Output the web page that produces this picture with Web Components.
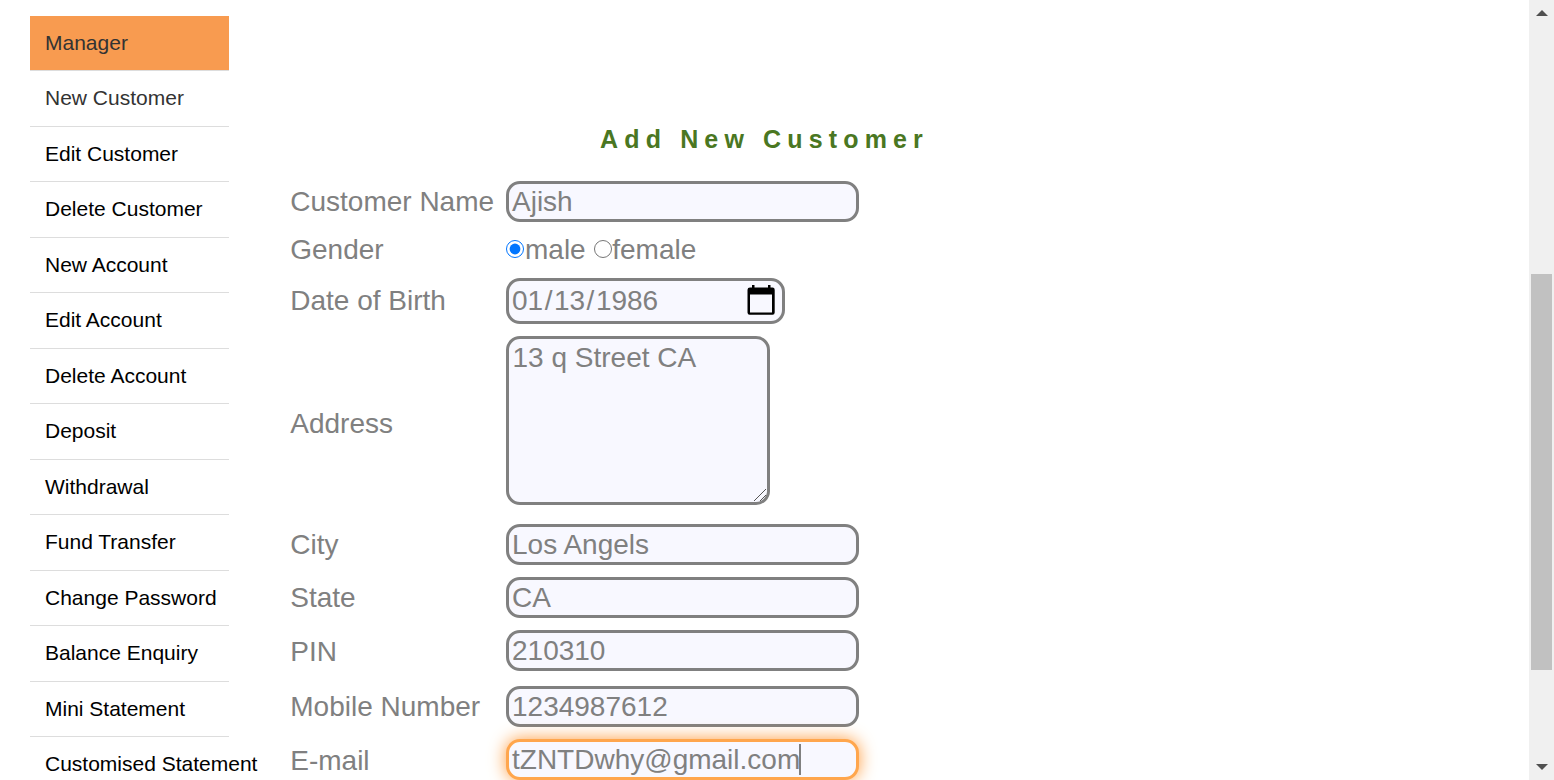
<!DOCTYPE html>
<html lang="en">
<head>
<meta charset="utf-8">
<title>Add New Customer</title>
<style>
html,body{margin:0;height:100%;overflow:hidden;background:#fff}
body{font-family:"Liberation Sans",Arial,sans-serif}
</style>
</head>
<body>
<bank-page>
  <side-menu slot="menu">
    <menu-item active>Manager</menu-item>
    <menu-item visited>New Customer</menu-item>
    <menu-item>Edit Customer</menu-item>
    <menu-item>Delete Customer</menu-item>
    <menu-item>New Account</menu-item>
    <menu-item>Edit Account</menu-item>
    <menu-item>Delete Account</menu-item>
    <menu-item>Deposit</menu-item>
    <menu-item>Withdrawal</menu-item>
    <menu-item>Fund Transfer</menu-item>
    <menu-item>Change Password</menu-item>
    <menu-item>Balance Enquiry</menu-item>
    <menu-item>Mini Statement</menu-item>
    <menu-item>Customised Statement</menu-item>
  </side-menu>
  <customer-form heading="Add New Customer">
    <form-row label="Customer Name"><text-field>Ajish</text-field></form-row>
    <form-row label="Gender" style="--h:44px"><radio-option checked>male</radio-option><radio-option>female</radio-option></form-row>
    <form-row label="Date of Birth" style="--h:58px"><date-field>01<span>/</span>13<span>/</span>1986</date-field></form-row>
    <form-row label="Address" style="--h:181px;--shift:3px"><area-field>13 q Street CA</area-field></form-row>
    <form-row label="City" style="margin-top:7px"><text-field>Los Angels</text-field></form-row>
    <form-row label="State"><text-field>CA</text-field></form-row>
    <form-row label="PIN" style="--shift:1px"><text-field>210310</text-field></form-row>
    <form-row label="Mobile Number" style="margin-top:3px"><text-field>1234987612</text-field></form-row>
    <form-row label="E-mail" style="--shift:1px"><text-field focused>tZNTDwhy@gmail.com</text-field></form-row>
  </customer-form>
  <page-scrollbar slot="bar"></page-scrollbar>
</bank-page>
<script>
const define = (name, html, setup) => customElements.define(name, class extends HTMLElement {
  constructor() {
    super();
    this.attachShadow({mode: 'open'}).innerHTML = html;
  }
  connectedCallback() { if (setup) setup(this, this.shadowRoot); }
});

define('bank-page', `<style>
:host{display:flex;height:780px;overflow:hidden;background:#fff}
main{flex:1;min-width:0}
</style><slot name="menu"></slot><main><slot></slot></main><slot name="bar"></slot>`);

define('side-menu', `<style>
:host{display:block;box-sizing:border-box;width:229px;padding:15.6px 0 0 30px;flex:none}
</style><slot></slot>`);

define('menu-item', `<style>
:host{display:block;box-sizing:border-box;height:55.5px;border-bottom:1px solid #ddd;padding-left:15px;
font-size:21px;line-height:54px;color:#000;white-space:nowrap}
:host([active]){background:#f89b50;color:#333}
:host([visited]){color:#333}
</style><slot></slot>`);

define('customer-form', `<style>
:host{display:block;padding:124px 0 0 61.25px;color:#808080;font-size:28px}
h1{margin:0 0 21px;padding-left:309.75px;font-size:25px;line-height:30px;letter-spacing:6.15px;color:#4a7722;font-weight:bold;white-space:nowrap}
</style><h1></h1><slot></slot>`, (el, root) => { root.querySelector('h1').textContent = el.getAttribute('heading'); });

define('form-row', `<style>
:host{display:grid;grid-template-columns:215.75px 1fr;align-items:center;height:var(--h,53px)}
label{line-height:32px;padding-top:calc(var(--shift,0px)*2);white-space:nowrap}
div{display:flex;align-items:center}
</style><label></label><div><slot></slot></div>`, (el, root) => { root.querySelector('label').textContent = el.getAttribute('label'); });

define('text-field', `<style>
:host{display:flex;align-items:center;box-sizing:border-box;width:353px;height:41px;border:3px solid #808080;border-radius:14px;
background:#f8f8ff;padding:0 3px;line-height:32px;white-space:nowrap}
:host([focused]){border-color:#ffa64d;box-shadow:0 0 17px #ff9b3d}
i{display:none;width:2px;height:31px;margin-left:-1px;background:#808080}
:host([focused]) i{display:block}
</style><slot></slot><i></i>`);

define('date-field', `<style>
:host{display:flex;align-items:center;justify-content:space-between;box-sizing:border-box;width:279px;height:46px;border:3px solid #808080;
border-radius:14px;background:#f8f8ff;padding:0 6px 0 3px;line-height:32px}
div{margin-top:-1px;white-space:nowrap}
::slotted(span){padding:0 1.5px}
svg{display:block;flex:none;overflow:visible}
</style><div><slot></slot></div><svg width="28" height="32" viewBox="0 0 28 32">
<path fill="#000" fill-rule="evenodd" d="M2 2.500H4V0H6.500V2.500H20V0H22.500V2.500H24.500Q26.700 2.500 26.700 4.700V27.500Q26.700 29.700 24.500 29.700H1.700Q-.5 29.700 -.5 27.500V4.700Q-.5 2.500 2 2.500ZM2 9.500V27.500H24V9.500Z"/></svg>`);

define('area-field', `<style>
:host{display:block;position:relative;box-sizing:border-box;width:264px;height:169px;border:3px solid #808080;border-radius:14px;
background:#f8f8ff;padding:3px 3.5px;line-height:32px}
svg{position:absolute;right:0;bottom:0}
</style><slot></slot><svg width="14" height="14" viewBox="0 0 14 14" fill="none" stroke="#555" stroke-width="1"><path d="M1 13 13 1M7 13 13 7"/></svg>`);

define('radio-option', `<style>
:host{display:flex;align-items:center;line-height:32px;margin-right:8px}
input{width:18px;height:18px;margin:0 1px 2px 0}
:host(:not([checked])) input{margin-right:.5px}
</style><input type="radio"><slot></slot>`, (el, root) => { root.querySelector('input').checked = el.hasAttribute('checked'); });

define('page-scrollbar', `<style>
:host{display:flex;flex-direction:column;align-items:center;width:25px;height:780px;flex:none;background:#f0f0f0;box-sizing:border-box;padding:10px 0}
b{width:21px;height:396px;background:#c1c1c1;margin:258px 0 auto}
svg{display:block}
</style><svg width="12" height="6"><path fill="#505050" d="M6 0 12 6H0Z"/></svg><b></b><svg width="12" height="6"><path fill="#505050" d="M0 0H12L6 6Z"/></svg>`);
</script>
</body>
</html>
